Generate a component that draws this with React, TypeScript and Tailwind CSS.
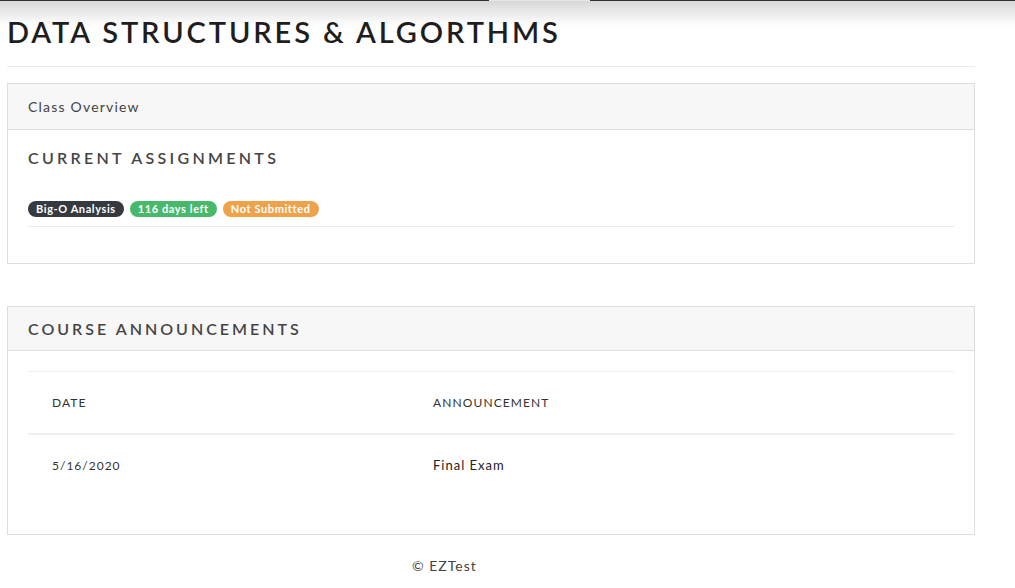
import React from "react";

export default function App() {
  const font = { fontFamily: "Lato, 'Noto Sans', sans-serif" };
  const badge = "h-[16px] px-[8px] rounded-full text-white text-[11px] font-bold tracking-[0.6px] leading-[16px]";
  return (
    <div className="min-h-[588px] w-[1015px] bg-white text-[#212529]" style={font}>
      <div className="h-[26px] bg-gradient-to-b from-[#d6d6d6] to-white">
        <div className="flex h-px">
          <div className="w-[489px] bg-[#2d3238]" />
          <div className="w-[101px] bg-[#e6e6e6]" />
          <div className="flex-1 bg-[#2d3238]" />
        </div>
      </div>
      <div className="px-[7px] w-[982px]">
        <h1 className="relative -mt-[14px] text-[29px] leading-[40px] tracking-[2.9px] font-semibold text-[#1e1e1e]">
          DATA STRUCTURES &amp; ALGORTHMS
        </h1>
        <div className="mt-[14px] h-px bg-[#ebebeb]" />

        <div className="mt-[16px] border border-[#dddddd]">
          <div className="h-[46px] bg-[#f7f7f7] border-b border-[#dddddd] flex items-center px-[20px] text-[14px] tracking-[1.2px] text-[#444]">
            Class Overview
          </div>
          <div className="px-[20px] pt-[16px] pb-[36px]">
            <div className="text-[16px] font-semibold tracking-[3.3px] text-[#444] leading-[24px]">CURRENT ASSIGNMENTS</div>
            <div className="mt-[31px] flex gap-[6px]">
              <span className={badge + " bg-[#343a40]"}>Big-O Analysis</span>
              <span className={badge + " bg-[#48b86a]"}>116 days left</span>
              <span className={badge + " bg-[#f0a24b]"}>Not Submitted</span>
            </div>
            <div className="mt-[9px] h-px bg-[#e9e9e9]" />
          </div>
        </div>

        <div className="mt-[42px] border border-[#dddddd]">
          <div className="h-[44px] bg-[#f7f7f7] border-b border-[#dddddd] flex items-center px-[20px] text-[16px] font-semibold tracking-[3px] text-[#444]">
            COURSE ANNOUNCEMENTS
          </div>
          <div className="px-[20px] pt-[20px] pb-[37px]">
            <div className="border-t border-[#efefef]">
              <div className="grid grid-cols-[405px_1fr] h-[63px] items-center border-b-2 border-[#efefef] text-[12px] tracking-[1.1px] text-[#333]">
                <div className="pl-[24px]">DATE</div>
                <div>ANNOUNCEMENT</div>
              </div>
              <div className="grid grid-cols-[405px_1fr] h-[62px] items-center text-[#222]">
                <div className="pl-[24px] text-[12px] tracking-[1px] text-[#333]">5/16/2020</div>
                <div className="text-[13px] tracking-[1px]">Final Exam</div>
              </div>
            </div>
          </div>
        </div>

        <div className="pl-[405px] pt-[20px] text-[14px] tracking-[1px] text-[#444]">© EZTest</div>
      </div>
    </div>
  );
}
